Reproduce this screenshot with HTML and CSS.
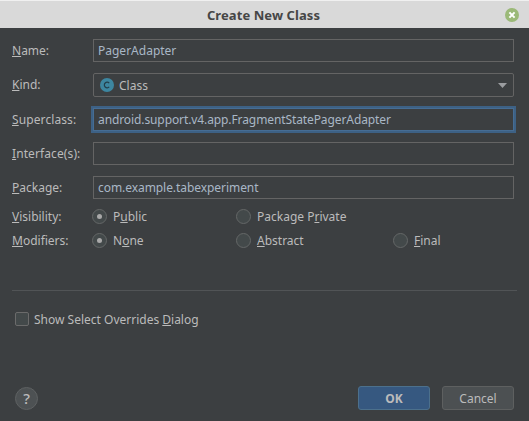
FILE: index.html
```html
<!DOCTYPE html>
<html lang="en">
<head>
<meta charset="utf-8">
<title>Create New Class</title>
<link rel="stylesheet" href="styles.css">
</head>
<body>
<header class="titlebar">
  <span class="title">Create New Class</span>
  <svg class="close" width="14" height="14" viewBox="0 0 14 14"><circle cx="7" cy="7" r="7" fill="#9bb978"/><path d="M4.4 4.4l5.2 5.2M9.6 4.4L4.4 9.6" stroke="#fff" stroke-width="2"/></svg>
</header>
<main class="form">
  <div class="row"><label><u>N</u>ame:</label><div class="field">PagerAdapter</div></div>
  <div class="row"><label><u>K</u>ind:</label>
    <div class="field select">
      <svg width="14" height="14" viewBox="0 0 14 14"><circle cx="7" cy="7" r="7" fill="#3d86a0"/><path d="M9.2 5.1A2.8 2.8 0 1 0 9.2 8.9" fill="none" stroke="#233f4b" stroke-width="1.2"/></svg>
      <span>Class</span>
      <svg class="arrow" width="9" height="5" viewBox="0 0 9 5"><path d="M0 0h9L4.5 5z" fill="#9b9da0"/></svg>
    </div>
  </div>
  <div class="row"><label class="wide"><u>S</u>uperclass:</label><div class="field focused">android.support.v4.app.FragmentStatePagerAdapter</div></div>
  <div class="row"><label class="wide"><u>I</u>nterface(s):</label><div class="field"></div></div>
  <div class="row"><label><u>P</u>ackage:</label><div class="field package">com.example.tabexperiment</div></div>
  <div class="options">
    <label><u>V</u>isibility:</label>
    <span class="option"><i class="radio on"></i><span>P<u>u</u>blic</span></span>
    <span class="option"><i class="radio"></i><span>Package P<u>r</u>ivate</span></span>
    <span></span>
    <label><u>M</u>odifiers:</label>
    <span class="option"><i class="radio on"></i><span>N<u>o</u>ne</span></span>
    <span class="option"><i class="radio"></i><span><u>A</u>bstract</span></span>
    <span class="option"><i class="radio"></i><span><u>F</u>inal</span></span>
  </div>
</main>
<hr>
<div class="check"><i class="box"></i><span>Show Select Overrides <u>D</u>ialog</span></div>
<footer class="actions">
  <span class="help">?</span>
  <button class="primary">OK</button>
  <button>Cancel</button>
</footer>
</body>
</html>
```
FILE: styles.css
```css
* { box-sizing: border-box; }
body {
  margin: 0;
  height: 421px;
  overflow: hidden;
  display: flex;
  flex-direction: column;
  background: #3c3f41;
  color: #bbbbbb;
  font: 12px/18px "Noto Sans", sans-serif;
}
u {
  text-decoration: underline 1px;
  text-underline-offset: 1px;
  text-decoration-skip-ink: none;
}
.titlebar {
  display: grid;
  grid-template-columns: 1fr auto 1fr;
  align-items: center;
  height: 28px;
  padding-right: 10px;
  border-top: 1px solid #f0f0f0;
  background: #d9d9d9;
  color: #464646;
}
.title {
  grid-column: 2;
  padding-left: 8px;
  font-size: 13px;
  font-weight: 700;
  letter-spacing: 0.08px;
}
.close { justify-self: end; }
.form { padding: 11px 15px 0 12px; }
.row {
  display: grid;
  grid-template-columns: 81px 1fr;
  align-items: center;
  height: 23px;
  margin-bottom: 11px;
}
.row:nth-child(2) { height: 24px; }
.wide { letter-spacing: 0.1px; }
.field {
  height: 23px;
  padding: 2px 4px;
  border: 1px solid #646464;
  color: #a9b7c6;
  line-height: 18px;
}
.select {
  display: flex;
  align-items: center;
  gap: 5px;
  height: 24px;
  padding: 0 6px;
  border-radius: 2px;
  color: #bbbbbb;
}
.select span { padding-top: 1px; }
.arrow { margin-left: auto; }
.focused {
  border-color: #466d94;
  box-shadow: 0 0 0 2px #3d6185;
  letter-spacing: -0.1px;
}
.package { letter-spacing: -0.06px; }
.options {
  display: grid;
  grid-template-columns: 80px 144px 157px auto;
  grid-auto-rows: 24px;
  align-items: center;
  margin-top: -5px;
}
.option { display: flex; align-items: center; gap: 6px; }
.radio {
  display: grid;
  place-items: center;
  width: 15px;
  height: 15px;
  margin-bottom: 1px;
  border: 1px solid #646767;
  border-radius: 50%;
  background: #43494a;
}
.on::after {
  content: "";
  width: 5px;
  height: 5px;
  border-radius: 50%;
  background: #a9a9a9;
}
hr {
  width: 505px;
  height: 1px;
  margin: 37px 12px 0;
  border: 0;
  background: #515456;
}
.check { display: flex; align-items: center; gap: 5px; height: 18px; margin: 19px 15px 0; }
.check span { padding-top: 2px; }
.box {
  width: 14px;
  height: 14px;
  border: 1px solid #6b6b6b;
  border-radius: 2px;
  background: #43494a;
}
.actions {
  display: flex;
  align-items: center;
  gap: 12px;
  margin-top: auto;
  padding: 0 15px 11px;
}
.help {
  width: 23px;
  height: 23px;
  margin-right: auto;
  border: 1px solid #5e6162;
  border-radius: 50%;
  background: #4d5153;
  font: 500 15px/21px "Noto Sans", sans-serif;
  text-align: center;
}
button {
  width: 72px;
  height: 24px;
  padding: 1px 0 0;
  border: 1px solid #5e6060;
  border-radius: 3px;
  background: #4c5052;
  color: #bbbbbb;
  font: 12px/20px "Noto Sans", sans-serif;
}
.primary {
  border-color: #4c708c;
  background: #365880;
  font-weight: 700;
}
```
